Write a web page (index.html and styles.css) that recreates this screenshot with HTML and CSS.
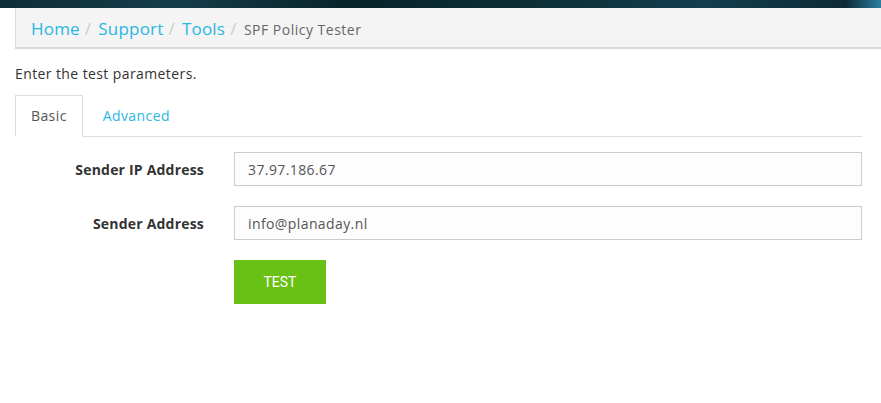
FILE: index.html
```html
<!DOCTYPE html>
<html lang="en">

<head>
	<meta charset="UTF-8">
	<meta name="viewport" content="width=device-width, initial-scale=1.0">
	<title>SPF Policy Tester</title>
	<link rel="stylesheet" href="styles.css">
</head>

<body>
	<div class="top-banner"></div>

	<ol class="breadcrumb">
		<li><a href="#">Home</a></li>
		<li><a href="#">Support</a></li>
		<li><a href="#">Tools</a></li>
		<li class="active">SPF Policy Tester</li>
	</ol>

	<div class="content">
		<p class="intro">Enter the test parameters.</p>

		<ul class="nav-tabs">
			<li class="active"><a href="#basic">Basic</a></li>
			<li><a href="#advanced">Advanced</a></li>
		</ul>

		<form class="form-horizontal" onsubmit="return false;">
			<div class="form-group">
				<label for="senderIp">Sender IP Address</label>
				<input type="text" id="senderIp" name="senderIp" value="37.97.186.67">
			</div>
			<div class="form-group">
				<label for="senderAddress">Sender Address</label>
				<input type="text" id="senderAddress" name="senderAddress" value="info@planaday.nl">
			</div>
			<div class="form-group">
				<span></span>
				<div><button type="submit" class="btn-test">TEST</button></div>
			</div>
		</form>
	</div>
</body>

</html>
```

FILE: styles.css
```css
* {
	box-sizing: border-box;
}

body {
	margin: 0;
	font-family: 'Open Sans', sans-serif;
	font-size: 14px;
	letter-spacing: 0.4px;
	color: #333;
	background: #fff;
}

a {
	text-decoration: none;
	color: #29b7e4;
}

.top-banner {
	height: 8px;
	background: linear-gradient(90deg, #0f2d38 0%, #163c4a 20%, #08232a 40%, #0d2e37 60%, #123e4e 80%, #0d2a35 96%, #2a7fa0 100%);
}

.breadcrumb {
	list-style: none;
	margin: 0 0 0 15px;
	padding: 10px 15px 8px 15px;
	height: 41px;
	background: #f4f4f4;
	border-left: 1px solid #dcdcdc;
	border-bottom: 2px solid #d9d9d9;
	display: flex;
	align-items: center;
}

.breadcrumb li {
	font-size: 17px;
	letter-spacing: 0.2px;
}

.breadcrumb li + li::before {
	content: "/";
	color: #ccc;
	padding: 0 7px 0 5px;
}

.breadcrumb .active {
	color: #666;
	font-size: 14px;
	letter-spacing: 0.5px;
}

.breadcrumb .active::before {
	font-size: 17px;
}

.content {
	padding: 0 19px 0 15px;
}

.intro {
	margin: 15px 0 12px 0;
	font-size: 14px;
}

.nav-tabs {
	list-style: none;
	margin: 0;
	padding: 0;
	display: flex;
	border-bottom: 1px solid #ddd;
}

.nav-tabs li {
	margin-bottom: -1px;
	margin-right: 2px;
}

.nav-tabs a {
	display: block;
	height: 42px;
	line-height: 40px;
	padding: 0 15px 0 17px;
	border: 1px solid transparent;
	font-size: 14px;
}

.nav-tabs .active a {
	padding: 0 15px;
	color: #555;
	border-color: #ddd;
	border-bottom-color: #fff;
	background: #fff;
}

.form-horizontal {
	padding-top: 15px;
}

.form-group {
	display: grid;
	grid-template-columns: 189px 1fr;
	column-gap: 30px;
	align-items: center;
	margin-bottom: 20px;
}

.form-group label {
	text-align: right;
	font-weight: bold;
	font-size: 14px;
	letter-spacing: 0.2px;
	color: #333;
}

.form-group input {
	height: 34px;
	padding: 0 13px;
	border: 1px solid #ccc;
	background: #fdfdfd;
	font-family: 'Open Sans', sans-serif;
	font-size: 14px;
	letter-spacing: 0.4px;
	color: #555;
}

.btn-test {
	width: 92px;
	height: 44px;
	background-color: #69c116;
	border: none;
	color: white;
	font-family: Roboto, sans-serif;
	font-size: 14px;
	letter-spacing: 0;
	cursor: pointer;
}
```
